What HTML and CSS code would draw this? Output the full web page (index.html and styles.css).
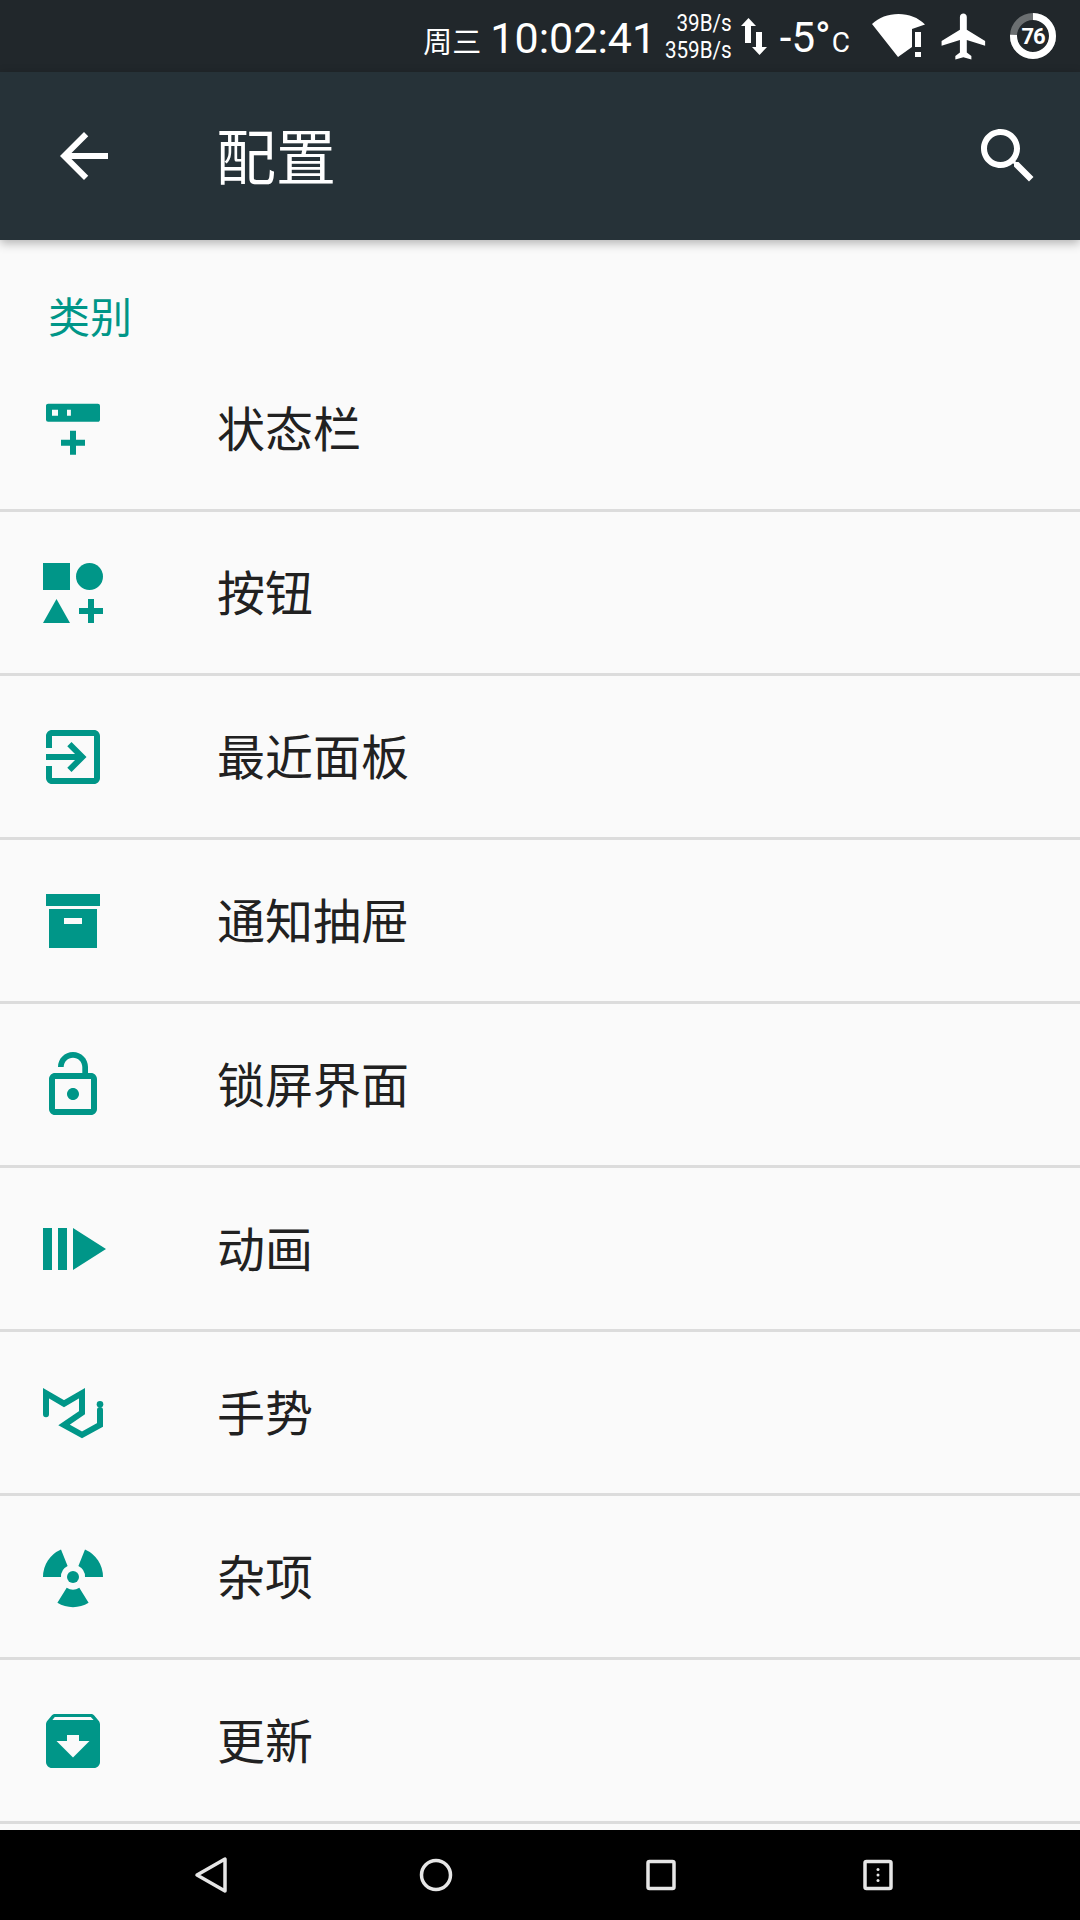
FILE: index.html
```html
<!DOCTYPE html>
<html lang="zh-CN">
<head>
    <meta charset="UTF-8">
    <meta name="viewport" content="width=device-width, initial-scale=1.0">
    <title>配置</title>
    <link rel="stylesheet" href="styles.css">
</head>
<body>

<div class="screen">
    <!-- Status bar -->
    <div class="status-bar">
        <span class="day">周三</span>
        <span class="clock">10:02:41</span>
        <div class="speed">
            <span>39B/s</span>
            <span>359B/s</span>
        </div>
        <svg class="traffic" viewBox="0 0 28 40">
            <path d="M8.500 2L16 10h-5v17H5V10H1z"/>
            <path d="M19.500 39L12 31h4V16h6v15h5z"/>
        </svg>
        <span class="temp">-5°<small>C</small></span>
        <svg class="wifi" viewBox="0 0 53 43">
            <path d="M0 10C7 3.500 16 0 26.500 0S46 3.500 53 10.500L40 15v18l-14 10z"/>
            <path d="M43 18h6v15h-6zM43 38h6v5h-6z"/>
        </svg>
        <svg class="plane" viewBox="0 0 24 24">
            <path d="M21 16v-2l-8-5V3.500c0-.83-.67-1.500-1.500-1.500S10 2.670 10 3.500V9l-8 5v2l8-2.500V19l-2 1.500V22l3.500-1 3.500 1v-1.500L13 19v-5.500l8 2.500z"/>
        </svg>
        <div class="battery">
            <svg viewBox="0 0 46 46">
                <circle class="battery-rest" cx="23" cy="23" r="19.500"/>
                <circle class="battery-level" cx="23" cy="23" r="19.500" pathLength="100" stroke-dasharray="76 24" transform="rotate(-90 23 23)"/>
            </svg>
            <span class="battery-text">76</span>
        </div>
    </div>

    <!-- App bar -->
    <header class="app-bar">
        <svg class="bar-icon" viewBox="0 0 24 24">
            <path d="M20 11H7.830l5.590-5.590L12 4l-8 8 8 8 1.410-1.410L7.830 13H20v-2z"/>
        </svg>
        <h1>配置</h1>
        <svg class="bar-icon search" viewBox="0 0 24 24">
            <path d="M15.500 14h-.79l-.28-.27C15.410 12.590 16 11.110 16 9.500 16 5.910 13.090 3 9.500 3S3 5.910 3 9.500 5.910 16 9.500 16c1.610 0 3.090-.59 4.230-1.570l.27.28v.79l5 4.990L20.490 19l-4.990-5zm-6 0C7.010 14 5 11.990 5 9.500S7.010 5 9.500 5 14 7.010 14 9.500 11.990 14 9.500 14z"/>
        </svg>
    </header>

    <!-- Settings list -->
    <main class="content">
        <h2 class="section-title">类别</h2>

        <div class="row">
            <svg class="row-icon" viewBox="0 0 24 24">
                <path fill-rule="evenodd" d="M3.700 3.600h16.600c.39 0 .7.310.7.700v4.600c0 .39-.31.700-.7.700H3.700a.7.700 0 0 1-.7-.7V4.300c0-.39.310-.7.700-.7zM5 5.600v2h2v-2zm6.300 0H10v2h1.300z"/>
                <path d="M11 12.600h2v3h3v2h-3v3h-2v-3H8v-2h3z"/>
            </svg>
            <span>状态栏</span>
        </div>
        <div class="row">
            <svg class="row-icon" viewBox="0 0 24 24">
                <path d="M2 2h9v9H2z"/>
                <circle cx="17.500" cy="6.500" r="4.500"/>
                <path d="M6.500 14L11 22H2z"/>
                <path d="M17 14h2v3h3v2h-3v3h-2v-3h-3v-2h3z"/>
            </svg>
            <span>按钮</span>
        </div>
        <div class="row">
            <svg class="row-icon" viewBox="0 0 24 24">
                <path d="M10.090 15.590L11.500 17l5-5-5-5-1.410 1.410L12.670 11H3v2h9.670l-2.580 2.590zM19 3H5c-1.110 0-2 .9-2 2v4h2V5h14v14H5v-4H3v4c0 1.100.89 2 2 2h14c1.100 0 2-.9 2-2V5c0-1.100-.9-2-2-2z"/>
            </svg>
            <span>最近面板</span>
        </div>
        <div class="row">
            <svg class="row-icon" viewBox="0 0 24 24">
                <path fill-rule="evenodd" d="M3 3h18v4H3zM4 8h16v13H4zM9 11v2h6v-2z"/>
            </svg>
            <span>通知抽屉</span>
        </div>
        <div class="row">
            <svg class="row-icon" viewBox="0 0 24 24">
                <path d="M12 17c1.100 0 2-.9 2-2s-.9-2-2-2-2 .9-2 2 .9 2 2 2zm6-9h-1V6c0-2.760-2.240-5-5-5S7 3.240 7 6h1.900c0-1.710 1.390-3.100 3.100-3.100 1.710 0 3.100 1.390 3.100 3.100v2H6c-1.100 0-2 .9-2 2v10c0 1.100.9 2 2 2h12c1.100 0 2-.9 2-2V10c0-1.100-.9-2-2-2zm0 12H6V10h12v10z"/>
            </svg>
            <span>锁屏界面</span>
        </div>
        <div class="row">
            <svg class="row-icon" viewBox="0 0 24 24">
                <path d="M2 5h3v14H2zM7 5h3v14H7zM12 5l11 7-11 7z"/>
            </svg>
            <span>动画</span>
        </div>
        <div class="row">
            <svg class="row-icon" viewBox="0 0 24 24">
                <path class="mi-line" d="M3 12.400V5.400l6 3.500 6-3.500v6.500L9 16l6 3.300 6-3.300v-5"/>
                <circle cx="21" cy="9.100" r="1.100"/>
            </svg>
            <span>手势</span>
        </div>
        <div class="row">
            <svg class="row-icon" viewBox="0 0 24 24">
                <circle cx="12" cy="12" r="2"/>
                <path d="M2 12A10 10 0 0 1 8 2.800L10.200 8.300A4 4 0 0 0 8 12z"/>
                <path d="M22 12A10 10 0 0 0 16 2.800L13.800 8.300A4 4 0 0 1 16 12z"/>
                <path d="M6.800 20.600A10 10 0 0 0 17.200 20.600L14.100 15.600A4 4 0 0 1 9.900 15.600z"/>
            </svg>
            <span>杂项</span>
        </div>
        <div class="row">
            <svg class="row-icon" viewBox="0 0 24 24">
                <path d="M20.540 5.230l-1.390-1.680C18.880 3.210 18.470 3 18 3H6c-.47 0-.88.210-1.160.55L3.460 5.230C3.170 5.570 3 6.020 3 6.500V19c0 1.100.9 2 2 2h14c1.100 0 2-.9 2-2V6.500c0-.48-.17-.93-.46-1.270zM12 17.500L6.500 12H10v-2h4v2h3.500L12 17.500zM5.120 5l.81-1h12l.94 1H5.120z"/>
            </svg>
            <span>更新</span>
        </div>
    </main>

    <!-- Navigation bar -->
    <nav class="nav-bar">
        <svg class="nav-key key-back" viewBox="0 0 40 40">
            <path d="M33 4v32L5 20z"/>
        </svg>
        <svg class="nav-key key-home" viewBox="0 0 40 40">
            <circle cx="20" cy="20" r="14.500"/>
        </svg>
        <svg class="nav-key key-recent" viewBox="0 0 40 40">
            <rect x="7" y="6.500" width="26" height="27" rx="1.500"/>
        </svg>
        <svg class="nav-key key-menu" viewBox="0 0 40 40">
            <rect x="7" y="6.500" width="26" height="27" rx="1.500"/>
            <circle class="key-dot" cx="20" cy="14.500" r="1.500"/>
            <circle class="key-dot" cx="20" cy="20" r="1.500"/>
            <circle class="key-dot" cx="20" cy="25.500" r="1.500"/>
        </svg>
    </nav>
</div>

</body>
</html>
```

FILE: styles.css
```css
body {
    margin: 0;
    font-family: "Noto Sans CJK SC", Roboto, sans-serif;
    background-color: #fafafa;
}
.screen {
    width: 1080px;
    height: 1920px;
    display: flex;
    flex-direction: column;
    overflow: hidden;
}

/* status bar */
.status-bar {
    height: 72px;
    flex: none;
    display: flex;
    align-items: center;
    justify-content: flex-end;
    padding-right: 24px;
    background-color: #21272b;
    color: #fff;
    font-family: Roboto, "Noto Sans CJK SC", sans-serif;
}
.status-bar svg {
    fill: #fff;
}
.day {
    font-family: "Noto Sans CJK SC", sans-serif;
    font-size: 29px;
    margin-top: 8px;
}
.clock {
    font-size: 43px;
    margin: 4px 0 0 9px;
}
.speed {
    display: flex;
    flex-direction: column;
    align-items: flex-end;
    margin: 2px 0 0 -2px;
    font-size: 24px;
    line-height: 27px;
    transform: scaleX(0.86);
    transform-origin: right center;
}
.traffic {
    width: 28px;
    height: 40px;
    margin-left: 8px;
}
.temp {
    font-size: 42px;
    margin: 2px 0 0 12px;
}
.temp small {
    font-size: 28px;
    margin-left: 1px;
}
.wifi {
    width: 53px;
    height: 43px;
    margin-left: 22px;
    margin-top: -1px;
}
.plane {
    width: 55px;
    height: 55px;
    margin-left: 12px;
}
.battery {
    width: 46px;
    height: 46px;
    margin-left: 18px;
    position: relative;
    display: flex;
    align-items: center;
    justify-content: center;
}
.battery svg {
    position: absolute;
    inset: 0;
    fill: none;
}
.battery-rest {
    stroke: #6b6f71;
    stroke-width: 7;
}
.battery-level {
    stroke: #fff;
    stroke-width: 7;
}
.battery-text {
    font-size: 22px;
    font-weight: 700;
    letter-spacing: -1px;
}

/* app bar */
.app-bar {
    height: 168px;
    flex: none;
    display: flex;
    align-items: center;
    padding: 0 36px 0 48px;
    background-color: #263238;
    color: #fff;
    box-shadow: 0 3px 10px rgba(0, 0, 0, 0.3);
    position: relative;
}
.app-bar h1 {
    margin: 0 0 6px 96px;
    font-size: 60px;
    font-weight: 400;
    flex: 1;
}
.bar-icon {
    width: 72px;
    height: 72px;
    fill: #fff;
}

/* list */
.content {
    flex: 1;
    background-color: #fafafa;
}
.section-title {
    height: 108px;
    margin: 0;
    padding: 45px 0 0 48px;
    box-sizing: border-box;
    color: #009688;
    font-size: 42px;
    font-weight: 400;
    line-height: 60px;
}
.row {
    height: 164px;
    box-sizing: border-box;
    display: flex;
    align-items: center;
    padding-left: 37px;
    border-bottom: 3px solid #dcdcdc;
    color: #212121;
    font-size: 48px;
}
.row span {
    margin: 0 0 5px 108px;
}
.row-icon {
    width: 72px;
    height: 72px;
    fill: #009688;
}
.mi-line {
    fill: none;
    stroke: #009688;
    stroke-width: 2;
    stroke-linecap: round;
}

/* navigation */
.nav-bar {
    height: 90px;
    flex: none;
    display: flex;
    align-items: center;
    padding-left: 192px;
    background-color: #000;
}
.nav-key {
    width: 40px;
    height: 40px;
    fill: none;
    stroke: #e6e6e6;
    stroke-width: 3.500;
    stroke-linejoin: round;
}
.key-home {
    margin-left: 184px;
}
.key-recent {
    margin-left: 185px;
}
.key-menu {
    margin-left: 177px;
}
.key-dot {
    fill: #e6e6e6;
    stroke: none;
}
```
